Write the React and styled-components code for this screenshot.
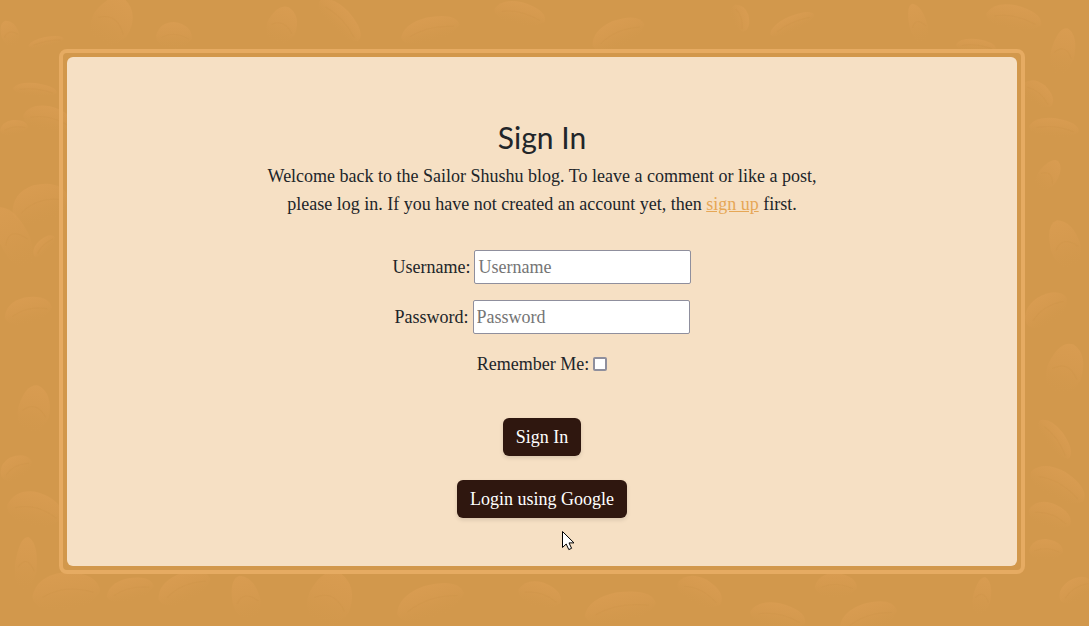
import React from "react";
import styled, { createGlobalStyle } from "styled-components";

const serif = `"Liberation Serif", "Times New Roman", serif`;

const GlobalStyle = createGlobalStyle`
  *, *::before, *::after { box-sizing: border-box; }
  body {
    margin: 0;
    background: #d2984c;
    color: #212529;
    font-family: ${serif};
    font-size: 18px;
    line-height: 28px;
  }
`;

const Page = styled.main`
  position: relative;
  min-height: 100vh;
  padding: 49px 64px 52px 59px;
  isolation: isolate;
`;

const Backdrop = styled.svg`
  position: absolute;
  inset: 0;
  width: 100%;
  height: 100%;
  z-index: -1;
`;

const Frame = styled.div`
  border: 4px solid #e6ab62;
  border-radius: 8px;
  padding: 4px;
`;

const Card = styled.section`
  display: flex;
  flex-direction: column;
  align-items: center;
  padding: 63px 16px 48px;
  background: #f6e0c4;
  border-radius: 6px;
  text-align: center;
`;

const Title = styled.h1`
  margin: 0 0 8px;
  font-family: Lato, sans-serif;
  font-size: 30px;
  font-weight: 400;
  line-height: 34px;
`;

const Intro = styled.p`
  margin: 0 0 32px;
  max-width: 576px;
`;

const SignUpLink = styled.a`
  color: #e6a756;
  text-decoration: underline;
`;

const Form = styled.form`
  display: flex;
  flex-direction: column;
  align-items: center;
  gap: 16px;
`;

const Field = styled.div`
  display: flex;
  align-items: center;
  gap: 4px;
`;

const TextInput = styled.input`
  width: 217px;
  height: 34px;
  padding: 1px 3px;
  border: 1px solid #8f8f9d;
  border-radius: 2px;
  background: #fff;
  color: #212529;
  font: inherit;
  &::placeholder { color: #757575; opacity: 1; }
`;

const Tick = styled.input`
  appearance: none;
  width: 14px;
  height: 14px;
  margin: 0;
  border: 2px solid #8f8f9d;
  border-radius: 2px;
  background: #fff;
  &:checked { background: #2f170f; }
`;

const Actions = styled.div`
  display: flex;
  flex-direction: column;
  align-items: center;
  gap: 24px;
  padding-top: 24px;
`;

const Button = styled.button`
  height: 38px;
  padding: 0 13px;
  border: 0;
  border-radius: 6px;
  background: #2f170f;
  color: #fff;
  font: inherit;
  box-shadow: 0 2px 4px rgba(0, 0, 0, 0.12);
  cursor: pointer;
`;

const Pointer = styled.svg`
  position: absolute;
  left: 562px;
  top: 531px;
  pointer-events: none;
`;

// Each bean: centre x, centre y, half length, half width, rotation
const beans = [
  [10, 34, 9, 14, -20], [46, 42, 18, 5, -12], [112, 22, 20, 26, 30], [174, 36, 18, 14, 0],
  [282, 26, 15, 20, 20], [340, 20, 28, 12, 45], [430, 30, 30, 13, -15], [520, 14, 26, 12, 12],
  [618, 34, 28, 14, -25], [740, 18, 14, 9, 70], [792, 24, 24, 8, -25], [918, 24, 9, 21, -15],
  [976, 46, 20, 7, 5], [1014, 18, 28, 13, 10], [1063, 52, 12, 24, 12], [35, 90, 22, 7, 5],
  [14, 128, 14, 8, -10], [48, 119, 25, 13, 10], [40, 204, 29, 20, -20], [14, 238, 15, 34, -25],
  [44, 246, 14, 7, -45], [28, 311, 24, 14, -15], [34, 410, 16, 25, 10], [16, 468, 17, 12, -30],
  [35, 510, 28, 18, 12], [26, 565, 11, 28, 5], [66, 592, 34, 20, -8], [130, 590, 24, 12, -15],
  [184, 588, 28, 15, -25], [246, 599, 14, 24, -15], [330, 600, 22, 29, 20], [430, 602, 35, 17, -20],
  [540, 595, 22, 13, 15], [620, 608, 36, 16, -12], [700, 592, 24, 14, 25], [778, 616, 28, 13, 10],
  [836, 586, 21, 13, 0], [868, 618, 30, 15, -20], [982, 597, 9, 20, 10], [1046, 550, 17, 11, 0],
  [1055, 439, 24, 10, 52], [1058, 485, 30, 15, 28], [1050, 516, 22, 13, 18], [1075, 590, 18, 11, -35],
  [1038, 94, 18, 11, 38], [1054, 128, 25, 10, 5], [1048, 176, 10, 18, 35], [1065, 245, 15, 26, -18],
  [1046, 310, 24, 15, -35], [1065, 370, 18, 27, 18],
];

const BeanField = () => (
  <Backdrop viewBox="0 0 1089 626" preserveAspectRatio="xMidYMid slice" aria-hidden="true">
    <defs>
      <linearGradient id="bean" x1="0" y1="0" x2="0" y2="1">
        <stop offset="0" stopColor="#dfa056" stopOpacity=".5" />
        <stop offset=".45" stopColor="#dd9e54" stopOpacity=".3" />
        <stop offset="1" stopColor="#d2984c" stopOpacity="0" />
      </linearGradient>
    </defs>
    {beans.map(([x, y, w, h, turn]) => (
      <g key={`${x}-${y}`} transform={`translate(${x} ${y}) rotate(${turn})`}>
        <path
          d={`M${-w} 0Q${-w * 0.8} ${-h} 0 ${-h}Q${w} ${-h * 0.8} ${w} ${h * 0.2}Q${w * 0.6} ${h} 0 ${h}Q${-w} ${h * 0.8} ${-w} 0Z`}
          fill="url(#bean)"
        />
        <path
          d={`M${-w * 0.7} ${h * 0.1}Q0 ${-h * 0.4} ${w * 0.8} ${h * 0.2}`}
          fill="none" stroke="#c98f47" strokeOpacity=".2"
        />
      </g>
    ))}
  </Backdrop>
);

export default function App() {
  return (
    <>
      <GlobalStyle />
      <Page>
        <BeanField />
        <Frame>
          <Card>
            <Title>Sign In</Title>
            <Intro>
              Welcome back to the Sailor Shushu blog. To leave a comment or like a post,
              please log in. If you have not created an account yet, then{" "}
              <SignUpLink href="#signup">sign up</SignUpLink> first.
            </Intro>
            <Form onSubmit={(event) => event.preventDefault()}>
              <Field>
                <label htmlFor="username">Username:</label>
                <TextInput id="username" type="text" placeholder="Username" />
              </Field>
              <Field>
                <label htmlFor="password">Password:</label>
                <TextInput id="password" type="password" placeholder="Password" />
              </Field>
              <Field>
                <label htmlFor="remember">Remember Me:</label>
                <Tick id="remember" type="checkbox" />
              </Field>
              <Actions>
                <Button type="submit">Sign In</Button>
                <Button type="button">Login using Google</Button>
              </Actions>
            </Form>
          </Card>
        </Frame>
        <Pointer width="13" height="20" viewBox="0 0 13 20" aria-hidden="true">
          <path d="M.5.5V16.5L4.2 13L6.8 18.6L9.6 17.3L7 11.9H12Z" fill="#fff" stroke="#000" />
        </Pointer>
      </Page>
    </>
  );
}
